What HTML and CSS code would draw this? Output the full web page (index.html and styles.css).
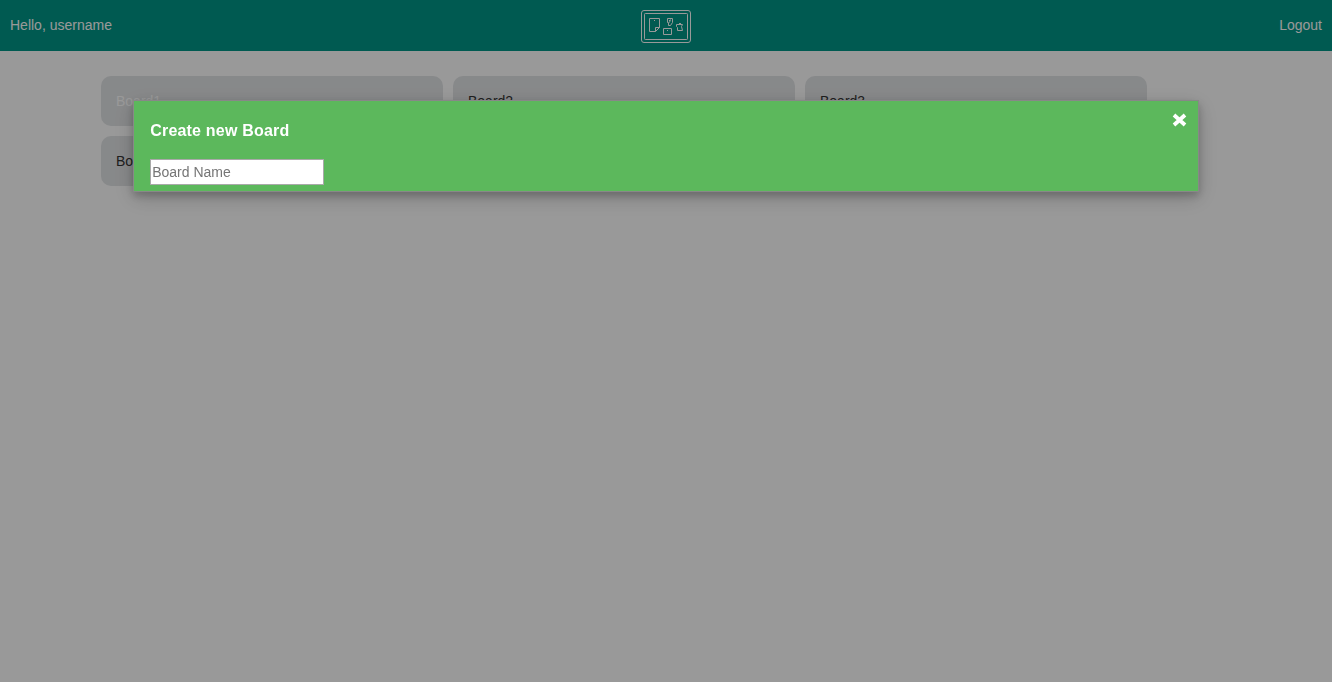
FILE: index.html
```html
<!DOCTYPE html>
<html lang="en">
<head>
<meta charset="utf-8">
<title>Boards</title>
<link rel="stylesheet" href="styles.css">
</head>
<body>
<header class="header">
  <span class="greeting">Hello, username</span>
  <svg class="logo" width="50" height="33" viewBox="0 0 50 33" fill="none" stroke="#fff">
    <rect x=".5" y=".5" width="49" height="32" rx="2.500"/>
    <rect x="3.500" y="3.500" width="43" height="26" rx=".8"/>
    <path d="M8.500 8.500h10v9l-4 4h-6zM14.500 21.500v-4h4M13 10.500h1"/>
    <path d="M26.500 8.500h5v4l-2 3h-2v-3h-1zM29.500 9.500l-1 3M28 10.500h1"/>
    <path d="M22.500 18.500h8v6h-8zM26 20.500h1"/>
    <path d="M35.500 14.500h6l-1 2 1 4h-5v-3l-1-1zM38 13.500h2"/>
  </svg>
  <span class="logout">Logout</span>
</header>
<main class="boards">
  <div class="board board-active">Board1</div>
  <div class="board">Board2</div>
  <div class="board">Board3</div>
  <div class="board">Board4</div>
</main>
<div class="overlay">
  <section class="modal">
    <div class="modal-body">
      <h2 class="modal-title">Create new Board</h2>
      <input class="board-name" type="text" placeholder="Board Name">
    </div>
    <svg class="close" width="15" height="14" viewBox="0 0 15 14"><path d="M2 2l11 10M13 2L2 12" stroke="#fff" stroke-width="3.800"/></svg>
  </section>
</div>
</body>
</html>
```
FILE: styles.css
```css
* { box-sizing: border-box; }
body {
  margin: 0;
  background: #fff;
  font: 14px/20px "Liberation Sans", Arial, sans-serif;
  color: #333;
}
.header {
  display: grid;
  grid-template-columns: 1fr 50px 1fr;
  align-items: center;
  height: 51px;
  padding: 0 10px 1px;
  background: #009688;
  color: #fff;
}
.logo { display: block; margin-top: 3px; }
.logout { text-align: right; }
.boards {
  display: grid;
  grid-template-columns: repeat(3, 342px);
  gap: 10px;
  padding: 25px 0 0 101px;
}
.board {
  height: 50px;
  padding: 15px;
  border-radius: 10px;
  background: #e2e4e6;
}
.board-active { color: #fff; }
.overlay {
  position: fixed;
  inset: 0;
  padding-top: 100px;
  background: rgba(0, 0, 0, .4);
}
.modal {
  display: flex;
  justify-content: space-between;
  width: 80%;
  height: 92px;
  margin: 0 auto;
  padding: 0 11px 0 16px;
  border: 1px solid #888;
  background: #5cb85c;
  box-shadow: 0 4px 8px rgba(0, 0, 0, .2), 0 6px 20px rgba(0, 0, 0, .19);
}
.modal-title {
  margin: 20px 0 18px;
  color: #fff;
  font-size: 16px;
  line-height: 20px;
  letter-spacing: .2px;
}
.board-name {
  display: block;
  width: 174px;
  height: 26px;
  padding: 1px;
  border: 1px solid #a9a9a9;
  background: #fff;
  font: 14px "Liberation Sans", Arial, sans-serif;
}
.board-name::placeholder { color: #757575; }
.close { margin-top: 12px; }
```
